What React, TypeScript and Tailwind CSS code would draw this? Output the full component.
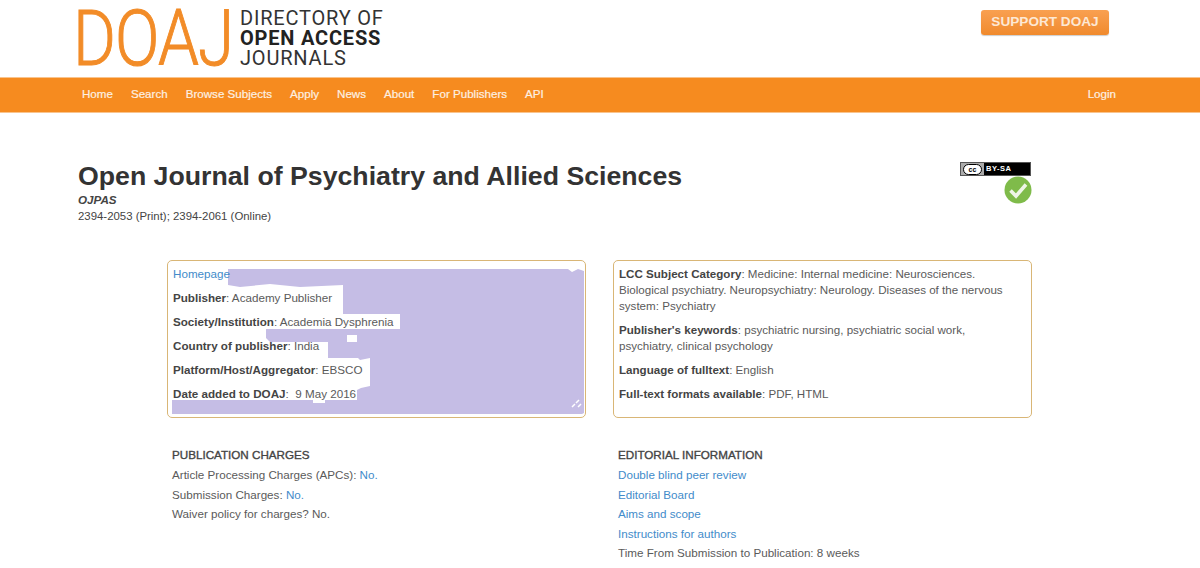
import React from "react";

const Label = ({ children }: { children: React.ReactNode }) => (
  <b className="font-bold text-[#444]">{children}</b>
);

const navItems = ["Home", "Search", "Browse Subjects", "Apply", "News", "About", "For Publishers", "API"];

const Heading = ({ children }: { children: React.ReactNode }) => (
  <h3 className="text-[11.65px] leading-[20px] font-normal text-[#444] [-webkit-text-stroke:0.35px_#444]">{children}</h3>
);

export default function App() {
  return (
    <div className="h-[568px] w-[1200px] overflow-hidden bg-white text-[11.65px] leading-[19.6px] text-[#5a5a5a]" style={{ fontFamily: '"Liberation Sans", Arial, sans-serif' }}>
      <header className="flex h-[77px] items-start justify-between pl-[78px] pr-[91px]">
        <div className="flex items-start">
          <div className="w-[162px]">
            <span className="mt-[-3px] ml-[-5px] block origin-left scale-x-[0.84] text-[78px] leading-[84px] font-light tracking-[-1px] text-[#f28c28] [-webkit-text-stroke:1px_#f28c28]" style={{ fontFamily: 'Roboto, sans-serif' }}>DOAJ</span>
          </div>
          <div className="mt-[8px] text-[20px] leading-[20px] tracking-[0.8px] text-[#333]" style={{ fontFamily: 'Roboto, sans-serif' }}>
            <div>DIRECTORY OF</div>
            <div className="font-bold text-[#222]">OPEN ACCESS</div>
            <div>JOURNALS</div>
          </div>
        </div>
        <a className="mt-[10px] flex h-[25px] w-[128px] items-center justify-center rounded-[3px] bg-gradient-to-b from-[#f9a050] to-[#f08a2c] pb-[2px] text-[13.6px] font-bold text-[#fde8d4] shadow-[0_1px_1px_rgba(0,0,0,0.2)]">SUPPORT DOAJ</a>
      </header>
      <nav className="flex h-[36px] items-center justify-between border-y border-y-[#f9c48e] bg-[#f68b1f] pr-[84px] pb-[2px] pl-[82px] text-[11.6px] text-[#fdf0e2] [-webkit-text-stroke:0.2px_#fdf0e2]">
        <div className="flex gap-[18px]">
          {navItems.map((n) => (
            <span key={n}>{n}</span>
          ))}
        </div>
        <span>Login</span>
      </nav>

      <section className="relative mt-[47px] px-[78px]">
        <div className="flex justify-between pr-[90px]">
          <div>
            <h1 className="text-[26.7px] leading-[32px] font-bold text-[#333]">Open Journal of Psychiatry and Allied Sciences</h1>
            <div className="text-[11.65px] leading-[16px] font-bold text-[#444] italic">OJPAS</div>
            <div className="text-[11.4px] leading-[16px] text-[#444]">2394-2053 (Print); 2394-2061 (Online)</div>
          </div>
          <div className="flex flex-col items-end pt-[2px]">
            <div className="mr-[1px] flex h-[14px] w-[71px] items-center border border-[#555] bg-black">
              <span className="flex h-full w-[23px] items-center justify-center bg-[#aaa]">
                <span className="flex h-[11px] w-[19px] items-center justify-center rounded-full border border-black bg-white text-[7px] leading-none font-bold text-black">cc</span>
              </span>
              <span className="ml-[2px] text-[7.5px] leading-none font-bold tracking-[0.5px] text-white">BY-SA</span>
            </div>
            <svg width="28" height="28" viewBox="0 0 28 28">
              <circle cx="14" cy="14" r="13.5" fill="#7fbb4a" />
              <path d="M6.5 14.5l5.5 5.5L22 8.5" fill="none" stroke="#eef5e6" strokeWidth="3.6" />
            </svg>
          </div>
        </div>

        <div className="mt-[36px] ml-[89px] grid w-[865px] grid-cols-[419px_419px] gap-x-[27px]">
          <div className="relative h-[158px] rounded-[5px] border border-[#d9b676] px-[5px] pt-[3px]">
            <svg className="absolute top-0 left-0" width="417" height="156" viewBox="168 261 417 156">
              <path fill="#c5bde5" d="M228 269H568L572 272L578 269L584 271V413L582 414H172V400H313V403H325V400H357V390L361 388L370 386V358L360 360L358 358H328V342H270L266 338V329H400V314H343V285L300 287L270 284L240 287L228 285Z" />
              <path fill="#fff" d="M347 335H357V342H347Z" />
              <path fill="none" stroke="#fff" strokeWidth="1.5" d="M572 407L575 404M576 403L579 400M578 407L581 404" />
            </svg>
            <div className="relative">
              <p className="mb-[4.4px] text-[#428bca]">Homepage</p>
              <p className="mb-[4.4px]"><Label>Publisher</Label>: Academy Publisher</p>
              <p className="mb-[4.4px]"><Label>Society/Institution</Label>: Academia Dysphrenia</p>
              <p className="mb-[4.4px]"><Label>Country of publisher</Label>: India</p>
              <p className="mb-[4.4px]"><Label>Platform/Host/Aggregator</Label>: EBSCO</p>
              <p><Label>Date added to DOAJ</Label>:&nbsp; 9 May 2016</p>
            </div>
          </div>
          <div className="h-[158px] rounded-[5px] border border-[#d9b676] pt-[5px] pr-[20px] pl-[5px] text-[11.6px] leading-[16px]">
            <p className="mb-[8px]"><Label>LCC Subject Category</Label>: Medicine: Internal medicine: Neurosciences. Biological psychiatry. Neuropsychiatry: Neurology. Diseases of the nervous system: Psychiatry</p>
            <p className="mb-[8px]"><Label>Publisher's keywords</Label>: psychiatric nursing, psychiatric social work, psychiatry, clinical psychology</p>
            <p className="mb-[8px]"><Label>Language of fulltext</Label>: English</p>
            <p><Label>Full-text formats available</Label>: PDF, HTML</p>
          </div>
        </div>

        <div className="mt-[27px] ml-[94px] grid grid-cols-[446px_1fr]">
          <div>
            <Heading>PUBLICATION CHARGES</Heading>
            <p>Article Processing Charges (APCs): <a className="text-[#428bca]">No.</a></p>
            <p>Submission Charges: <a className="text-[#428bca]">No.</a></p>
            <p>Waiver policy for charges? No.</p>
          </div>
          <div>
            <Heading>EDITORIAL INFORMATION</Heading>
            <p className="text-[#428bca]">Double blind peer review</p>
            <p className="text-[#428bca]">Editorial Board</p>
            <p className="text-[#428bca]">Aims and scope</p>
            <p className="text-[#428bca]">Instructions for authors</p>
            <p>Time From Submission to Publication: 8 weeks</p>
          </div>
        </div>
      </section>
    </div>
  );
}
